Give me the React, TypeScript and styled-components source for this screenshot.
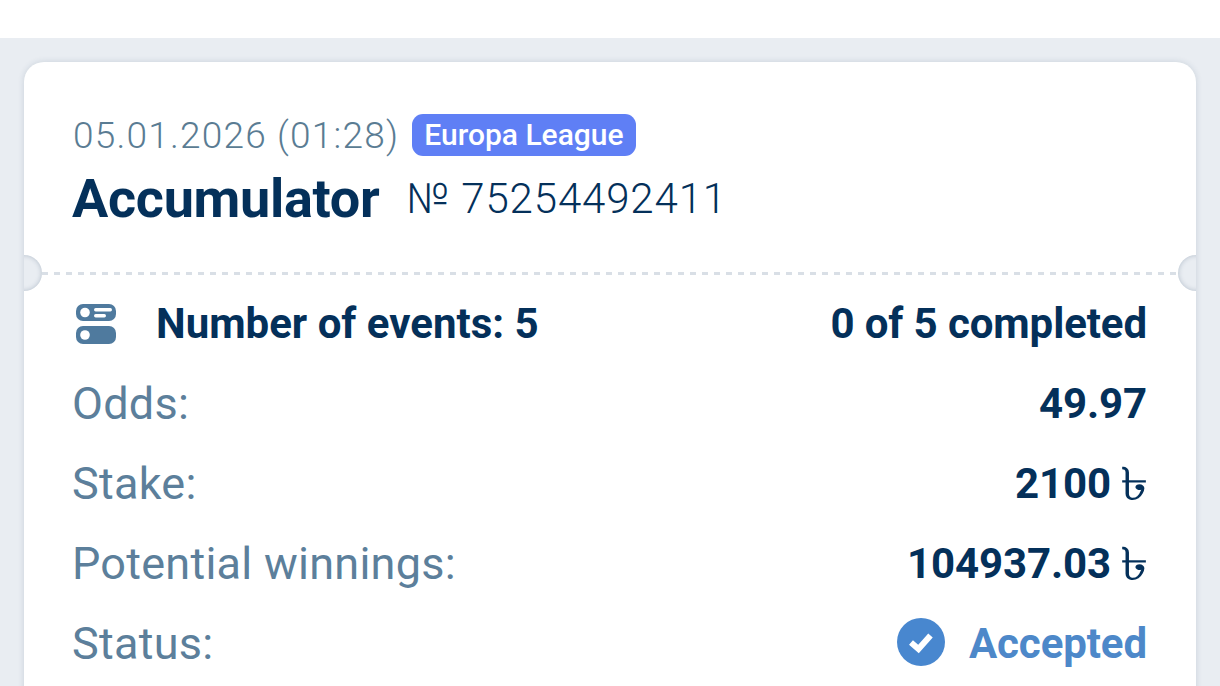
import React from 'react';
import styled, { createGlobalStyle } from 'styled-components';

const GlobalStyle = createGlobalStyle`
  html, body {
    margin: 0;
    padding: 0;
    background: #fff;
    overflow: hidden;
  }
  body {
    font-family: Roboto, "Noto Sans", sans-serif;
  }
`;

const Page = styled.div`
  margin-top: 38px;
  height: 648px;
  padding: 24px 24px 0;
  box-sizing: border-box;
  background: #e9edf2;
  overflow: hidden;
`;

const Card = styled.div`
  background: #fff;
  border-radius: 20px 20px 0 0;
  box-shadow: 0 0 6px rgba(40, 70, 100, 0.16);
  height: 700px;
`;

const Head = styled.div`
  height: 210px;
  box-sizing: border-box;
  padding: 51px 49px 0;
`;

const DateRow = styled.div`
  display: flex;
  align-items: center;
  gap: 13px;
  height: 44px;
`;

const DateText = styled.span`
  font-size: 37px;
  font-weight: 300;
  letter-spacing: 1.2px;
  color: #5a7c93;
`;

const Badge = styled.span`
  background: #5f7ff5;
  color: #fff;
  font-size: 30px;
  font-weight: 500;
  line-height: 42px;
  padding: 0 12px;
  border-radius: 11px;
`;

const TitleRow = styled.div`
  display: flex;
  align-items: center;
  gap: 27px;
  margin-top: 10px;
`;

const Title = styled.span`
  font-size: 54px;
  font-weight: 700;
  color: #04305a;
  letter-spacing: -0.3px;
  margin-left: -1px;
`;

const Number = styled.span`
  font-size: 42px;
  font-weight: 300;
  color: #04305a;
  letter-spacing: 0.85px;
`;

const Divider = styled.div`
  position: relative;
  height: 3px;
  margin: 0 18px;
  background: repeating-linear-gradient(90deg, #d9dfe6 0 6px, transparent 6px 12px);
`;

const Notch = styled.span<{ $side: 'left' | 'right' }>`
  position: absolute;
  top: -17px;
  ${(p) => p.$side}: -36px;
  width: 36px;
  height: 36px;
  background: #e9edf2;
  border-radius: 50%;
  box-shadow: inset 0 0 5px rgba(40, 70, 100, 0.28);
  clip-path: ${(p) => (p.$side === 'left' ? 'inset(0 0 0 18px)' : 'inset(0 18px 0 0)')};
`;

const Rows = styled.div`
  padding: 8px 49px 0 48px;
`;

const Row = styled.div`
  display: flex;
  align-items: center;
  justify-content: space-between;
  height: 80px;
`;

const Label = styled.span`
  font-size: 45px;
  font-weight: 400;
  letter-spacing: 0.25px;
  color: #5c7f9b;
`;

const EventsLabel = styled.span`
  display: flex;
  align-items: center;
  gap: 40px;
  padding-left: 4px;
  font-size: 42px;
  font-weight: 700;
  letter-spacing: 0;
  color: #04305a;
`;

const EventsIconBox = styled.span`
  display: flex;
  margin-top: 2px;
`;

const Value = styled.span<{ $color?: string }>`
  display: flex;
  align-items: center;
  font-size: 42px;
  font-weight: 700;
  letter-spacing: -0.1px;
  color: ${(p) => p.$color ?? '#04305a'};
`;

const Currency = styled.span`
  display: inline-block;
  font-family: "Noto Sans", "DejaVu Sans", sans-serif;
  font-size: 46px;
  line-height: 1;
  font-weight: 500;
  margin: -3px 1px 0 12px;
  transform: scaleX(1.25);
`;

const StatusIcon = styled.span`
  display: flex;
  margin: -2px 24px 0 0;
`;

const EventsIcon = () => (
  <svg width="40" height="40" viewBox="0 0 40 40">
    <rect x="0" y="0" width="40" height="17" rx="7" fill="#4f7a9e" />
    <rect x="0" y="22" width="40" height="18" rx="7" fill="#4f7a9e" />
    <circle cx="9" cy="8.5" r="4.8" fill="#fff" />
    <circle cx="9" cy="31" r="4.8" fill="#fff" />
    <rect x="18" y="4" width="18" height="3.5" rx="1.7" fill="#fff" />
    <rect x="18" y="10" width="12" height="3.5" rx="1.7" fill="#fff" />
  </svg>
);

const CheckIcon = () => (
  <svg width="48" height="48" viewBox="0 0 48 48">
    <circle cx="24" cy="24" r="24" fill="#4887cf" />
    <path d="M14 24.5l7.5 6.5 12-13.5" fill="none" stroke="#fff" strokeWidth="6" />
  </svg>
);

export default function App() {
  return (
    <>
      <GlobalStyle />
      <Page>
        <Card>
          <Head>
            <DateRow>
              <DateText>05.01.2026 (01:28)</DateText>
              <Badge>Europa League</Badge>
            </DateRow>
            <TitleRow>
              <Title>Accumulator</Title>
              <Number>№ 75254492411</Number>
            </TitleRow>
          </Head>
          <Divider>
            <Notch $side="left" />
            <Notch $side="right" />
          </Divider>
          <Rows>
            <Row>
              <EventsLabel>
                <EventsIconBox>
                  <EventsIcon />
                </EventsIconBox>
                Number of events: 5
              </EventsLabel>
              <Value>0 of 5 completed</Value>
            </Row>
            <Row>
              <Label>Odds:</Label>
              <Value>49.97</Value>
            </Row>
            <Row>
              <Label>Stake:</Label>
              <Value>
                2100<Currency>৳</Currency>
              </Value>
            </Row>
            <Row>
              <Label>Potential winnings:</Label>
              <Value>
                104937.03<Currency>৳</Currency>
              </Value>
            </Row>
            <Row>
              <Label>Status:</Label>
              <Value $color="#4d88c9">
                <StatusIcon>
                  <CheckIcon />
                </StatusIcon>
                Accepted
              </Value>
            </Row>
          </Rows>
        </Card>
      </Page>
    </>
  );
}
